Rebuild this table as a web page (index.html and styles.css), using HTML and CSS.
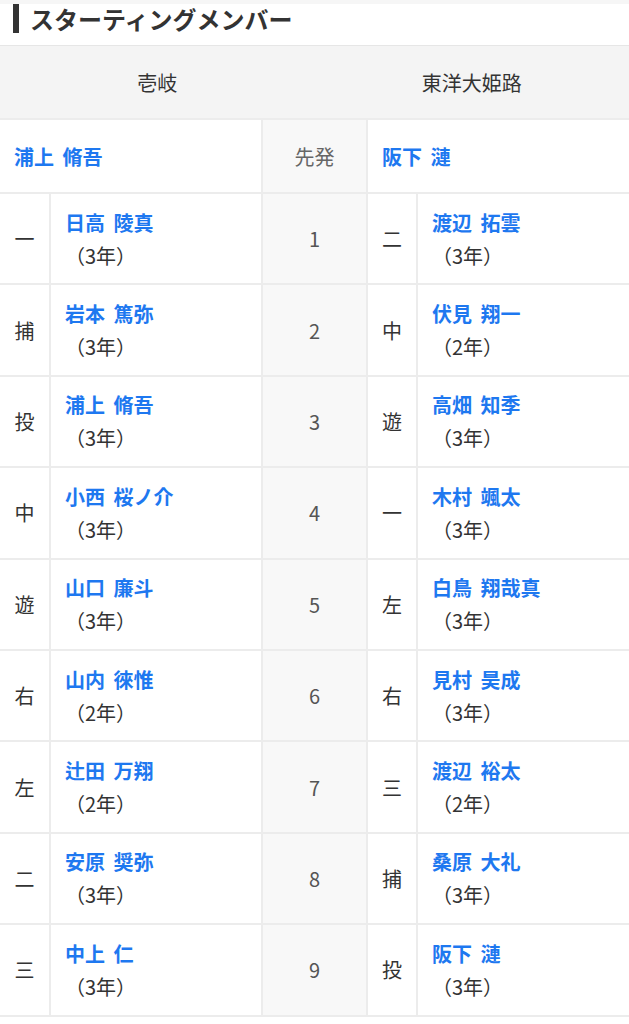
FILE: index.html
```html
<!DOCTYPE html>
<html lang="ja">
  <head>
    <meta charset="UTF-8" />
    <meta name="viewport" content="width=device-width, initial-scale=1.0" />
    <title>スターティングメンバー</title>
    <link rel="stylesheet" href="styles.css">
  </head>
  <body>
    <h2 class="section-title"><span class="bar"></span>スターティングメンバー</h2>

    <div class="teams">
      <div class="team">壱岐</div>
      <div class="team">東洋大姫路</div>
    </div>

    <div class="lineup">
      <!-- starting pitchers -->
      <div class="starter wide"><a href="#">浦上 脩吾</a></div>
      <div class="num label">先発</div>
      <div class="starter wide"><a href="#">阪下 漣</a></div>

      <div class="pos">一</div>
      <div class="player"><a href="#">日高 陵真</a><span class="year">（3年）</span></div>
      <div class="num">1</div>
      <div class="pos">二</div>
      <div class="player"><a href="#">渡辺 拓雲</a><span class="year">（3年）</span></div>

      <div class="pos">捕</div>
      <div class="player"><a href="#">岩本 篤弥</a><span class="year">（3年）</span></div>
      <div class="num">2</div>
      <div class="pos">中</div>
      <div class="player"><a href="#">伏見 翔一</a><span class="year">（2年）</span></div>

      <div class="pos">投</div>
      <div class="player"><a href="#">浦上 脩吾</a><span class="year">（3年）</span></div>
      <div class="num">3</div>
      <div class="pos">遊</div>
      <div class="player"><a href="#">高畑 知季</a><span class="year">（3年）</span></div>

      <div class="pos">中</div>
      <div class="player"><a href="#">小西 桜ノ介</a><span class="year">（3年）</span></div>
      <div class="num">4</div>
      <div class="pos">一</div>
      <div class="player"><a href="#">木村 颯太</a><span class="year">（3年）</span></div>

      <div class="pos">遊</div>
      <div class="player"><a href="#">山口 廉斗</a><span class="year">（3年）</span></div>
      <div class="num">5</div>
      <div class="pos">左</div>
      <div class="player"><a href="#">白鳥 翔哉真</a><span class="year">（3年）</span></div>

      <div class="pos">右</div>
      <div class="player"><a href="#">山内 徠惟</a><span class="year">（2年）</span></div>
      <div class="num">6</div>
      <div class="pos">右</div>
      <div class="player"><a href="#">見村 昊成</a><span class="year">（3年）</span></div>

      <div class="pos">左</div>
      <div class="player"><a href="#">辻田 万翔</a><span class="year">（2年）</span></div>
      <div class="num">7</div>
      <div class="pos">三</div>
      <div class="player"><a href="#">渡辺 裕太</a><span class="year">（2年）</span></div>

      <div class="pos">二</div>
      <div class="player"><a href="#">安原 奨弥</a><span class="year">（3年）</span></div>
      <div class="num">8</div>
      <div class="pos">捕</div>
      <div class="player"><a href="#">桑原 大礼</a><span class="year">（3年）</span></div>

      <div class="pos">三</div>
      <div class="player"><a href="#">中上 仁</a><span class="year">（3年）</span></div>
      <div class="num">9</div>
      <div class="pos">投</div>
      <div class="player"><a href="#">阪下 漣</a><span class="year">（3年）</span></div>
    </div>
  </body>
</html>
```

FILE: styles.css
```css
body {
  font-family: "Noto Sans CJK JP", "Noto Sans", sans-serif;
  margin: 0;
  padding: 0;
  background-color: #fff;
  color: #333;
}

/* Section heading */
.section-title {
  display: flex;
  align-items: center;
  gap: 11px;
  margin: 0;
  padding: 0 0 12px 13px;
  border-top: 4px solid #f6f6f6;
  font-size: 24px;
  line-height: 29px;
  font-weight: bold;
  color: #333;
}

.section-title .bar {
  width: 6px;
  height: 29px;
  background-color: #333;
}

/* Team names */
.teams {
  display: flex;
  height: 72px;
  border-top: 1px solid #e6e6e6;
  background-color: #f4f4f4;
}

.team {
  flex: 1;
  display: flex;
  align-items: center;
  justify-content: center;
  font-size: 20px;
  color: #333;
}

/* Lineup grid */
.lineup {
  display: grid;
  grid-template-columns: 49px 210px 103px 48px 211px;
  grid-template-rows: 72px repeat(9, 89.4px);
  gap: 2px;
  padding: 2px 0;
  background-color: #ececec;
}

.lineup > div {
  background-color: #fff;
}

.lineup a {
  color: #1e78f0;
  font-weight: bold;
  text-decoration: none;
  word-spacing: 4px;
}

.starter {
  display: flex;
  align-items: center;
  padding-left: 14px;
  font-size: 20px;
}

.starter.wide {
  grid-column: span 2;
}

.lineup > .num {
  display: flex;
  align-items: center;
  justify-content: center;
  background-color: #f8f8f8;
  font-size: 20px;
  color: #555;
}

.lineup > .label {
  color: #666;
}

.pos {
  display: flex;
  align-items: center;
  justify-content: center;
  font-size: 20px;
  color: #333;
}

.player {
  display: flex;
  flex-direction: column;
  justify-content: center;
  padding-left: 14px;
  font-size: 20px;
  line-height: 33px;
}

.player .year {
  color: #333;
}
```
